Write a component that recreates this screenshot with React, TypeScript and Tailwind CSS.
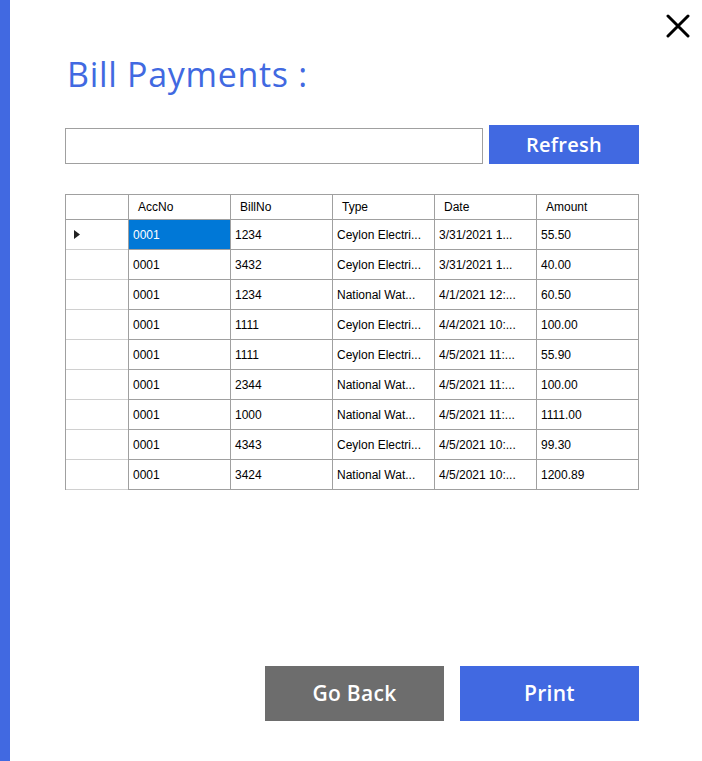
import { Fragment } from "react";

const BLUE = "bg-[#4169e1]";

type Bill = {
  acc: string;
  bill: string;
  type: string;
  date: string;
  amount: string;
};

const rows: Bill[] = [
  { acc: "0001", bill: "1234", type: "Ceylon Electri...", date: "3/31/2021 1...", amount: "55.50" },
  { acc: "0001", bill: "3432", type: "Ceylon Electri...", date: "3/31/2021 1...", amount: "40.00" },
  { acc: "0001", bill: "1234", type: "National Wat...", date: "4/1/2021 12:...", amount: "60.50" },
  { acc: "0001", bill: "1111", type: "Ceylon Electri...", date: "4/4/2021 10:...", amount: "100.00" },
  { acc: "0001", bill: "1111", type: "Ceylon Electri...", date: "4/5/2021 11:...", amount: "55.90" },
  { acc: "0001", bill: "2344", type: "National Wat...", date: "4/5/2021 11:...", amount: "100.00" },
  { acc: "0001", bill: "1000", type: "National Wat...", date: "4/5/2021 11:...", amount: "1111.00" },
  { acc: "0001", bill: "4343", type: "Ceylon Electri...", date: "4/5/2021 10:...", amount: "99.30" },
  { acc: "0001", bill: "3424", type: "National Wat...", date: "4/5/2021 10:...", amount: "1200.89" },
];

const headers = ["AccNo", "BillNo", "Type", "Date", "Amount"];

function Grid() {
  return (
    <div
      className="w-[574px] border-t border-r border-l border-[#a0a0a0] text-[12px] text-black"
      style={{ fontFamily: '"Liberation Sans", Arial, sans-serif' }}
    >
      <div className="grid grid-cols-[62px_repeat(5,102px)]">
        <div className="h-[25px] border-b border-[#a0a0a0]" />
        {headers.map((h) => (
          <div
            key={h}
            className="flex h-[25px] items-center border-b border-l border-[#a0a0a0] pl-[9px]"
          >
            {h}
          </div>
        ))}
        {rows.map((r, i) => (
          <Fragment key={i}>
            <div className="flex h-[30px] items-center border-b border-[#d0d0d0] pl-[8px]">
              {i === 0 && (
                <svg width="6" height="9" viewBox="0 0 6 9">
                  <path d="M0 0 L6 4.5 L0 9 Z" fill="#222" />
                </svg>
              )}
            </div>
            {[r.acc, r.bill, r.type, r.date, r.amount].map((v, j) => (
              <div
                key={j}
                className={`flex h-[30px] items-center overflow-hidden whitespace-nowrap border-b border-l border-[#a0a0a0] pl-[4px] ${
                  i === 0 && j === 0 ? "bg-[#0078d7] text-white" : ""
                }`}
              >
                {v}
              </div>
            ))}
          </Fragment>
        ))}
      </div>
    </div>
  );
}

export default function App() {
  return (
    <div className="flex h-[761px] w-[702px] bg-white">
      <div className={`w-[10px] shrink-0 ${BLUE}`} />
      <div className="relative flex flex-1 flex-col pt-[57px] pl-[55px]">
        <button
          type="button"
          aria-label="Close"
          className="absolute top-[14px] right-[12px] h-[24px] w-[24px]"
        >
          <svg width="24" height="24" viewBox="0 0 24 24">
            <path
              d="M2 2 L22 22 M22 2 L2 22"
              stroke="#000"
              strokeWidth="3"
              strokeLinecap="round"
            />
          </svg>
        </button>

        <h1
          className="pl-[2px] text-[34px] leading-none tracking-[0.7px] text-[#4169e1]"
          style={{ fontFamily: '"Open Sans", sans-serif' }}
        >
          Bill Payments :
        </h1>

        <div className="mt-[34px] flex items-end gap-[6px]">
          <input
            type="text"
            className="h-[36px] w-[418px] border border-[#a0a0a0] bg-white outline-none"
          />
          <button
            type="button"
            className={`h-[39px] w-[150px] ${BLUE} text-[20px] font-semibold tracking-[0.3px] text-white`}
            style={{ fontFamily: '"Open Sans", sans-serif' }}
          >
            Refresh
          </button>
        </div>

        <div className="mt-[30px]">
          <Grid />
        </div>

        <div
          className="mt-[176px] flex w-[574px] justify-end gap-[16px] text-[21px] font-semibold tracking-[0.3px] text-white"
          style={{ fontFamily: '"Open Sans", sans-serif' }}
        >
          <button type="button" className="h-[55px] w-[179px] bg-[#6d6d6d]">
            Go Back
          </button>
          <button type="button" className={`h-[55px] w-[179px] ${BLUE}`}>
            Print
          </button>
        </div>
      </div>
    </div>
  );
}
